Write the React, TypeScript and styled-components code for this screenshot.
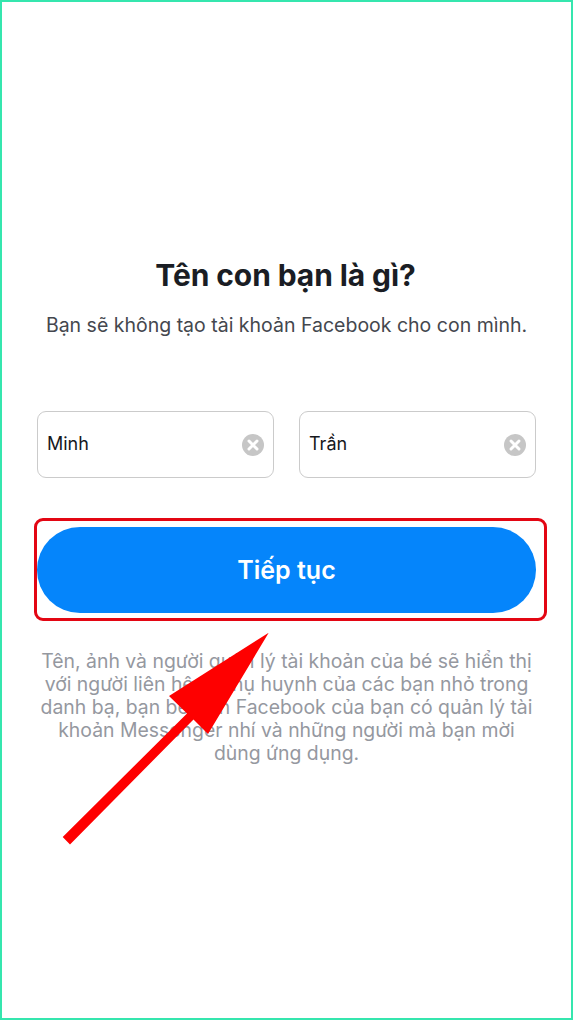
import React from "react";
import styled, { createGlobalStyle } from "styled-components";

const Global = createGlobalStyle`
  html, body { margin: 0; padding: 0; background: #fff; }
  * { box-sizing: border-box; }
`;

const Screen = styled.div`
  position: relative;
  width: 573px;
  height: 1020px;
  border: 2px solid #35e6ae;
  background: #fff;
  font-family: Inter, "Noto Sans", "Liberation Sans", sans-serif;
  display: flex;
  flex-direction: column;
  align-items: center;
  padding: 254px 35px 0;
  overflow: hidden;
`;

const Title = styled.h1`
  margin: 0;
  font-size: 30px;
  line-height: 38px;
  font-weight: 700;
  color: #1a1d24;
  letter-spacing: -0.1px;
  transform: translateX(-1px);
`;

const Subtitle = styled.p`
  margin: 19px 0 0;
  font-size: 19.5px;
  line-height: 24px;
  font-weight: 400;
  color: #44474e;
  white-space: nowrap;
`;

const Fields = styled.div`
  display: flex;
  width: 100%;
  gap: 25px;
  margin-top: 74px;
`;

const Field = styled.div`
  flex: 1;
  height: 67px;
  display: flex;
  align-items: center;
  justify-content: space-between;
  padding: 0 9px 3px 9px;
  border: 1.5px solid #cbcbcb;
  border-radius: 9px;
  background: #fff;
`;

const FieldValue = styled.span`
  font-size: 18px;
  color: #16181c;
`;

const ClearIcon = styled.svg`
  width: 22px;
  height: 22px;
  margin-top: 4px;
  flex: none;
`;

const Primary = styled.button`
  width: 100%;
  height: 86px;
  margin-top: 49px;
  border: 0;
  border-radius: 43px;
  background: #0585fb;
  color: #fff;
  font-family: inherit;
  font-size: 25px;
  font-weight: 600;
`;

const Notice = styled.p`
  margin: 37px 0 0;
  width: 100%;
  font-size: 19.4px;
  line-height: 23px;
  text-align: center;
  color: #95989f;
  white-space: nowrap;
`;

const Highlight = styled.div`
  position: absolute;
  left: 32px;
  top: 516px;
  width: 513px;
  height: 103px;
  border: 3px solid #e30613;
  border-radius: 9px;
  pointer-events: none;
`;

const Arrow = styled.svg`
  position: absolute;
  left: -2px;
  top: -2px;
  width: 573px;
  height: 1020px;
  pointer-events: none;
`;

const Clear = () => (
  <ClearIcon viewBox="0 0 22 22">
    <circle cx="11" cy="11" r="11" fill="#c6c6c6" />
    <path d="M7 7l8 8M15 7l-8 8" stroke="#fff" strokeWidth="3" strokeLinecap="round" />
  </ClearIcon>
);

export default function App() {
  return (
    <>
      <Global />
      <Screen>
        <Title>Tên con bạn là gì?</Title>
        <Subtitle>Bạn sẽ không tạo tài khoản Facebook cho con mình.</Subtitle>
        <Fields>
          <Field>
            <FieldValue>Minh</FieldValue>
            <Clear />
          </Field>
          <Field>
            <FieldValue>Trần</FieldValue>
            <Clear />
          </Field>
        </Fields>
        <Primary>Tiếp tục</Primary>
        <Notice>
          Tên, ảnh và người quản lý tài khoản của bé sẽ hiển thị
          <br />
          với người liên hệ là phụ huynh của các bạn nhỏ trong
          <br />
          danh bạ, bạn bè trên Facebook của bạn có quản lý tài
          <br />
          khoản Messenger nhí và những người mà bạn mời
          <br />
          dùng ứng dụng.
        </Notice>
        <Highlight />
        <Arrow viewBox="0 0 573 1020">
          <path
            d="M268.7 632.7 L169 696 L187 713.5 L62.7 837 L70 844.5 L193.5 719.5 L208 734 Z"
            fill="#fe0000"
          />
        </Arrow>
      </Screen>
    </>
  );
}
